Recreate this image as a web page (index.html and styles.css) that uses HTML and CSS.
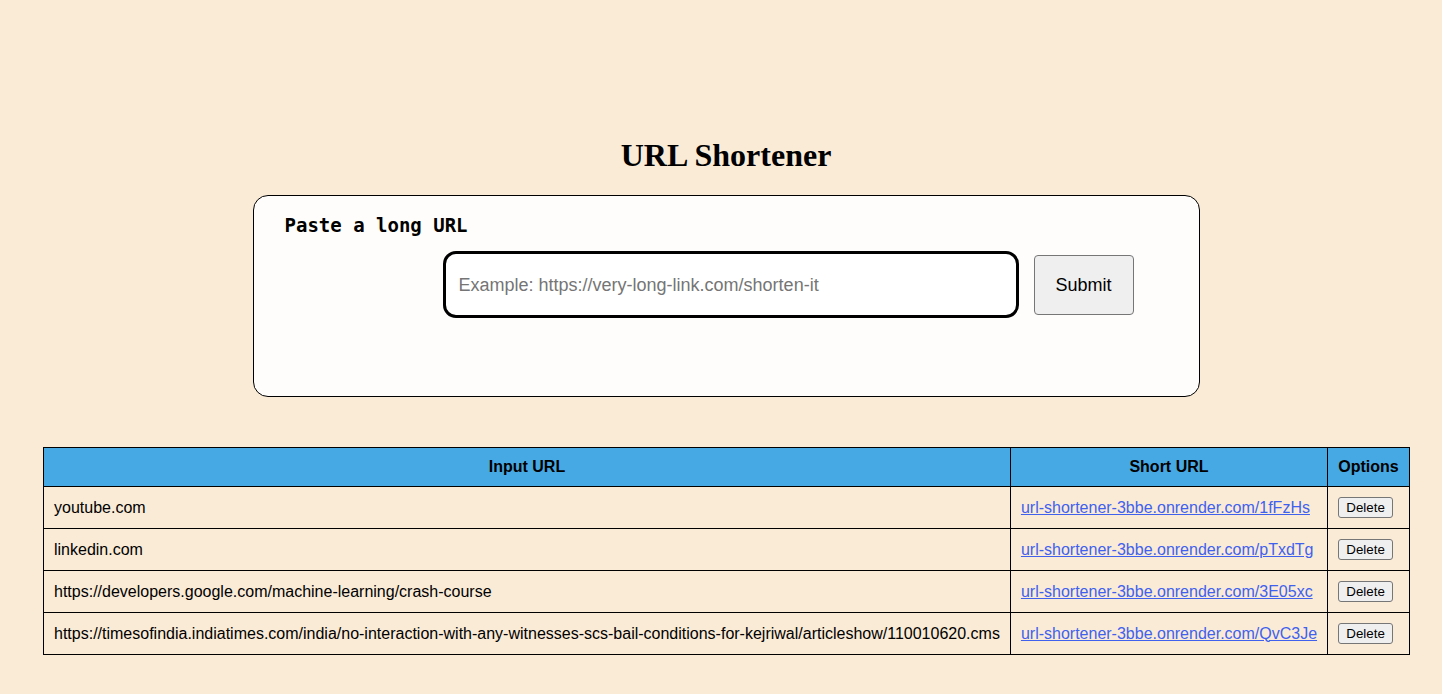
FILE: index.html
```html
<!DOCTYPE html>
<html lang="en">
<head>
<meta charset="utf-8">
<title>URL Shortener</title>
<link rel="stylesheet" href="styles.css">
</head>
<body>
<main class="page">
  <h1 class="title">URL Shortener</h1>
  <section class="card">
    <h2 class="card-label">Paste a long URL</h2>
    <form class="form-row">
      <input class="url-input" type="text" placeholder="Example: https://very-long-link.com/shorten-it">
      <button class="submit-btn" type="button">Submit</button>
    </form>
  </section>
  <table class="url-table">
    <thead>
      <tr>
        <th class="col-input">Input URL</th>
        <th class="col-short">Short URL</th>
        <th class="col-opt">Options</th>
      </tr>
    </thead>
    <tbody>
      <tr>
        <td>youtube.com</td>
        <td><a class="short-link" href="#">url-shortener-3bbe.onrender.com/1fFzHs</a></td>
        <td><button class="del-btn" type="button">Delete</button></td>
      </tr>
      <tr>
        <td>linkedin.com</td>
        <td><a class="short-link" href="#">url-shortener-3bbe.onrender.com/pTxdTg</a></td>
        <td><button class="del-btn" type="button">Delete</button></td>
      </tr>
      <tr>
        <td>https://developers.google.com/machine-learning/crash-course</td>
        <td><a class="short-link" href="#">url-shortener-3bbe.onrender.com/3E05xc</a></td>
        <td><button class="del-btn" type="button">Delete</button></td>
      </tr>
      <tr>
        <td>https://timesofindia.indiatimes.com/india/no-interaction-with-any-witnesses-scs-bail-conditions-for-kejriwal/articleshow/110010620.cms</td>
        <td><a class="short-link" href="#">url-shortener-3bbe.onrender.com/QvC3Je</a></td>
        <td><button class="del-btn" type="button">Delete</button></td>
      </tr>
    </tbody>
  </table>
</main>
</body>
</html>
```

FILE: styles.css
```css
html, body {
  margin: 0;
  padding: 0;
  background: #faebd7;
}

.page {
  padding: 137px 0 0 10px;
  display: flex;
  flex-direction: column;
  align-items: center;
  font-family: "Liberation Sans", Arial, sans-serif;
  color: #000;
}

.title {
  margin: 0;
  font-family: "Liberation Serif", "Times New Roman", serif;
  font-size: 32px;
  font-weight: bold;
  line-height: 37px;
}

.card {
  box-sizing: border-box;
  margin-top: 21px;
  width: 947px;
  height: 202px;
  border: 1px solid #000;
  border-radius: 15px;
  background: #fffdfb;
  padding: 18px 30px 0 31px;
}

.card-label {
  margin: 0;
  font-family: "DejaVu Sans Mono", monospace;
  font-size: 19px;
  font-weight: bold;
  line-height: 22px;
}

.form-row {
  margin: 15px 0 0 158px;
  display: flex;
  align-items: center;
  gap: 15px;
}

.url-input {
  box-sizing: border-box;
  width: 576px;
  height: 67px;
  border: 3px solid #000;
  border-radius: 13px;
  padding: 2px 13px 0;
  background: #fff;
  font-family: "Liberation Sans", Arial, sans-serif;
  font-size: 18px;
  outline: none;
}

.url-input::placeholder {
  color: #757575;
}

.submit-btn {
  box-sizing: border-box;
  width: 100px;
  height: 60px;
  border: 1px solid #767676;
  border-radius: 4px;
  background: #efefef;
  font-family: "Liberation Sans", Arial, sans-serif;
  font-size: 18px;
  color: #000;
  padding-top: 2px;
}

.url-table {
  margin-top: 50px;
  margin-left: 1px;
  width: 1367px;
  border-collapse: collapse;
  font-size: 16px;
  line-height: 18px;
}

.url-table th,
.url-table td {
  border: 1px solid #000;
  padding: 10px;
  text-align: left;
  white-space: nowrap;
  vertical-align: middle;
}

.url-table th {
  background: #46a9e4;
  font-weight: bold;
  text-align: center;
}

.col-input { width: 946px; }
.col-short { width: 296px; }
.col-opt { width: 62px; }

.short-link {
  color: #4061ee;
  text-decoration: underline;
}

.del-btn {
  display: block;
  box-sizing: border-box;
  width: 55px;
  height: 21px;
  font-family: "Liberation Sans", Arial, sans-serif;
  font-size: 13.33px;
  padding: 1px 0;
  text-align: center;
  border: 1px solid #767676;
  border-radius: 3px;
  background: #efefef;
  color: #000;
  line-height: 17px;
}
```
